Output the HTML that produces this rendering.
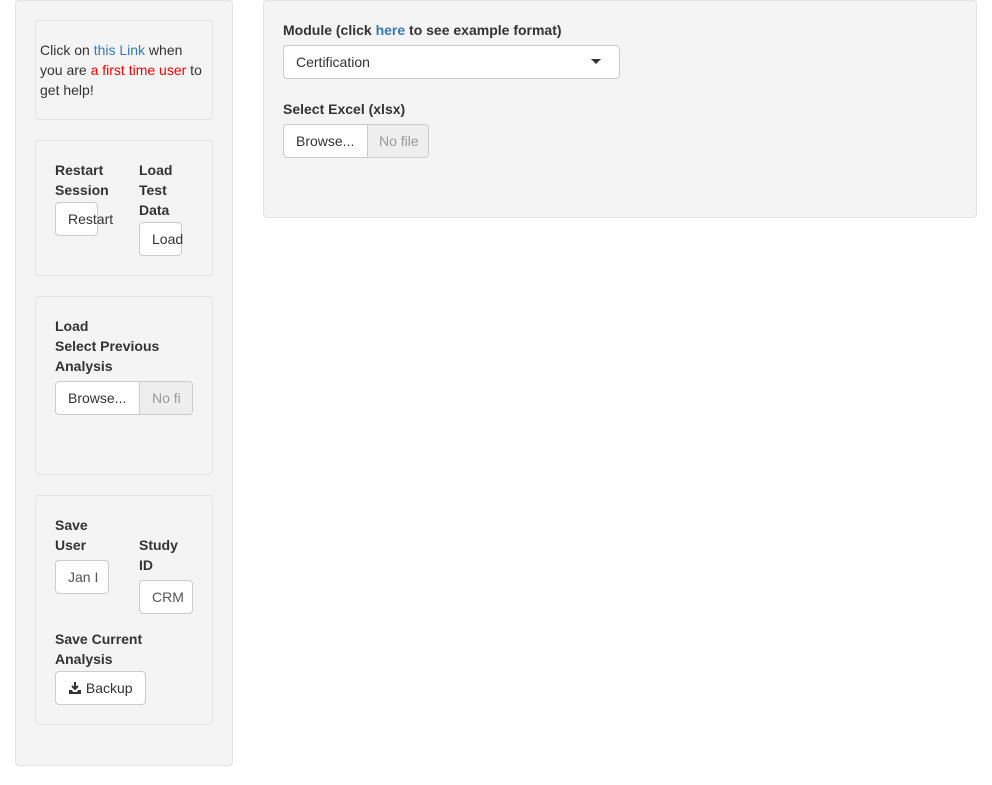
<!DOCTYPE html>
<html><head><style>
*{box-sizing:border-box;margin:0;padding:0}
body{width:992px;height:785px;background:#fff;font-family:"Liberation Sans",sans-serif;font-size:14px;color:#333;position:relative;overflow:hidden}
.a{position:absolute}
.well{position:absolute;background:#f4f4f4;border:1px solid #e3e3e3;border-radius:4px}
.t{position:absolute;line-height:20px;white-space:nowrap}
.b{font-weight:bold}
.btn{position:absolute;background:#fff;border:1px solid #ccc;border-radius:4px;overflow:hidden;line-height:32px;white-space:nowrap;color:#333}
.gray{background:#eee;color:#999}
</style></head><body>
<div class="well" style="left:15px;top:0;width:218px;height:766px"></div>
<div class="well" style="left:35px;top:20px;width:178px;height:100px"></div>
<div class="t" style="left:40px;top:40px">Click on <span style="color:#337ab7">this Link</span> when</div>
<div class="t" style="left:40px;top:60px">you are <span style="color:#f00">a first time user</span> to</div>
<div class="t" style="left:40px;top:80px">get help!</div>

<div class="well" style="left:35px;top:140px;width:178px;height:136px"></div>
<div class="t b" style="left:55px;top:160px">Restart<br>Session</div>
<div class="btn" style="left:55px;top:202px;width:43px;height:34px;padding-left:12px;overflow:visible">Restart</div>
<div class="t b" style="left:139px;top:160px">Load<br>Test<br>Data</div>
<div class="btn" style="left:139px;top:222px;width:43px;height:34px;padding-left:12px;overflow:visible">Load</div>

<div class="well" style="left:35px;top:296px;width:178px;height:179px"></div>
<div class="t b" style="left:55px;top:316px">Load<br>Select Previous<br>Analysis</div>
<div class="btn" style="left:55px;top:381px;width:138px;height:34px">
<span style="position:absolute;left:0;top:0;width:84px;height:32px;padding-left:12px">Browse...</span>
<span class="gray" style="position:absolute;left:83px;top:0;width:60px;height:32px;padding-left:12px;border-left:1px solid #ccc">No fi</span></div>

<div class="well" style="left:35px;top:495px;width:178px;height:230px"></div>
<div class="t b" style="left:55px;top:515px">Save<br>User</div>
<div class="btn" style="left:55px;top:560px;width:54px;height:34px;padding-left:12px;color:#555">Jan I</div>
<div class="t b" style="left:139px;top:535px">Study<br>ID</div>
<div class="btn" style="left:139px;top:580px;width:54px;height:34px;padding-left:12px;color:#555">CRM</div>
<div class="t b" style="left:55px;top:629px">Save Current<br>Analysis</div>
<div class="btn" style="left:55px;top:671px;width:91px;height:34px;padding-left:12px">
<svg width="14" height="14" viewBox="0 0 14 14" style="vertical-align:-2px"><path d="M7 1v7M4 5l3 3 3-3" stroke="#333" stroke-width="2" fill="none"/><path d="M1 9h3l1 2h4l1-2h3v4H1z" fill="#333"/></svg> Backup</div>

<div class="well" style="left:263px;top:0;width:714px;height:218px"></div>
<div class="t b" style="left:283px;top:20px">Module (click <span style="color:#337ab7">here</span> to see example format)</div>
<div class="btn" style="left:283px;top:45px;width:337px;height:34px;padding-left:12px">Certification
<svg width="10" height="6" style="position:absolute;right:18px;top:13px"><path d="M0 0h10L5 5z" fill="#333"/></svg></div>
<div class="t b" style="left:283px;top:99px">Select Excel (xlsx)</div>
<div class="btn" style="left:283px;top:124px;width:146px;height:34px">
<span style="position:absolute;left:0;top:0;width:84px;height:32px;padding-left:12px">Browse...</span>
<span class="gray" style="position:absolute;left:83px;top:0;width:62px;height:32px;padding-left:11px;border-left:1px solid #ccc">No file</span></div>
</body></html>
